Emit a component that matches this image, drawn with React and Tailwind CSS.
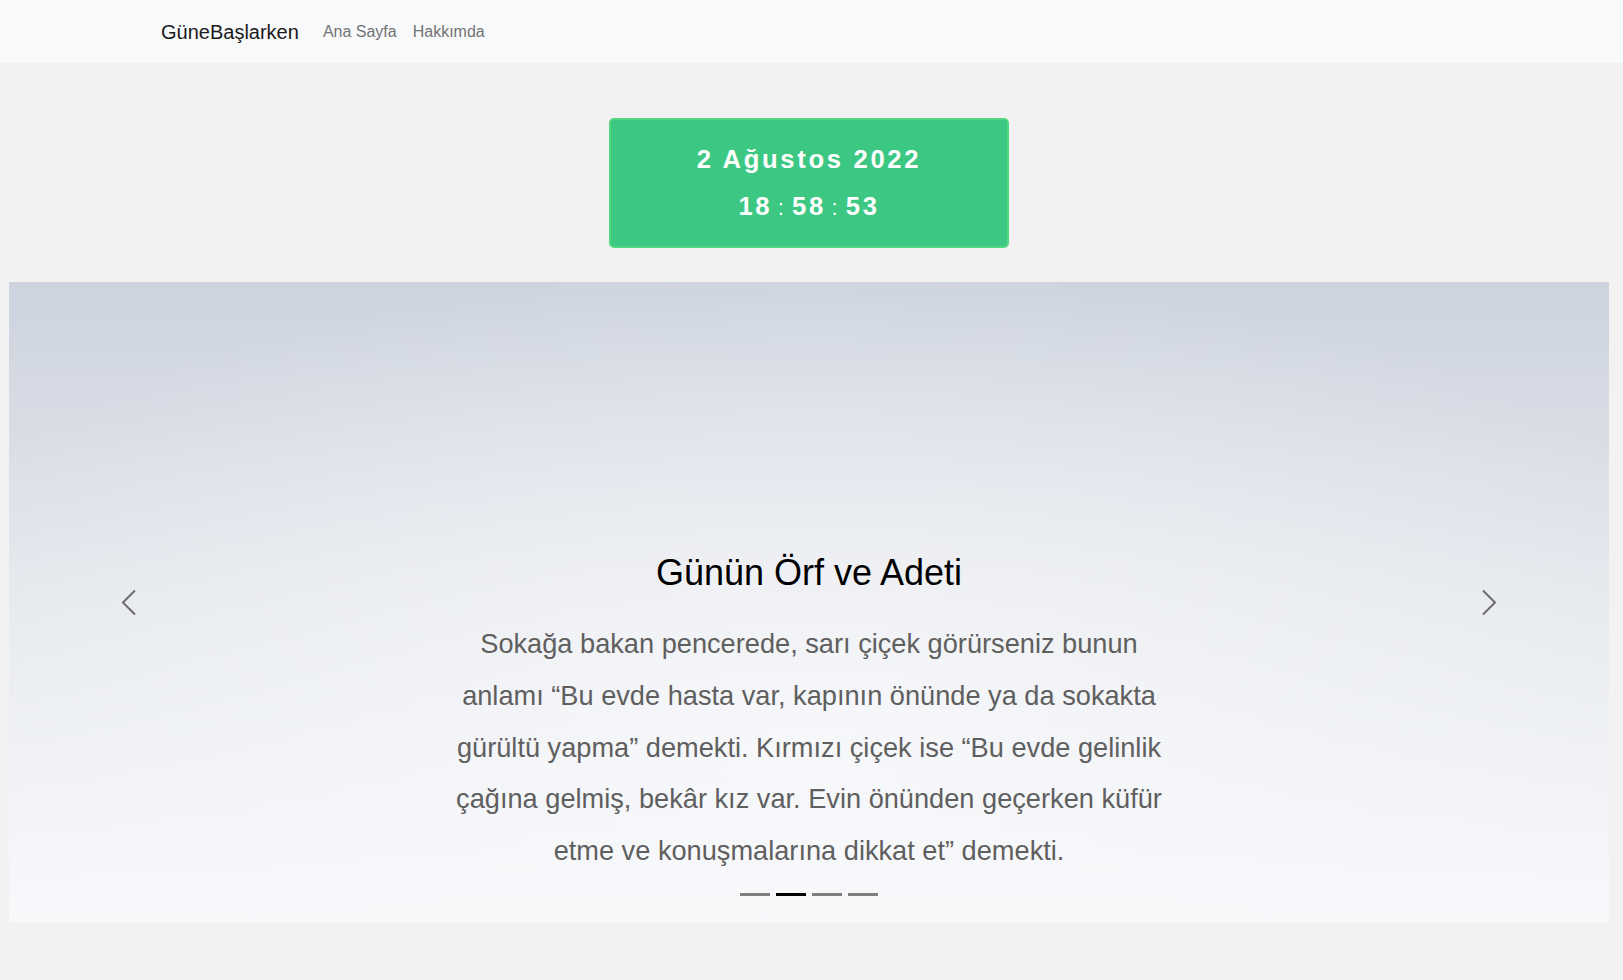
import React from 'react'

const SANS = "font-['Liberation_Sans',Arial,sans-serif]"

function Chevron({ dir }) {
  return (
    <svg width="16" height="27" viewBox="0 0 16 27" fill="none">
      <path
        d={dir === 'left' ? 'M14 1.5 L2 13.5 L14 25.5' : 'M2 1.5 L14 13.5 L2 25.5'}
        stroke="#6b6b6b"
        strokeWidth="2"
      />
    </svg>
  )
}

function Navbar() {
  return (
    <nav className="h-[63px] bg-[#f8f9fa] flex items-center pl-[161px]">
      <a className="text-[20px] text-[#1a1a1a] mr-[16px]">GüneBaşlarken</a>
      <div className="flex text-[16px] text-[#737373]">
        <a className="px-[8px]">Ana Sayfa</a>
        <a className="px-[8px]">Hakkımda</a>
      </div>
    </nav>
  )
}

function Clock() {
  return (
    <div className="w-[400px] h-[130px] rounded-[5px] border-2 border-[#52d680] bg-[#3cc883] text-white font-bold text-[25.6px] tracking-[0.105em] flex flex-col items-center justify-center gap-[9px]">
      <div className="leading-[38px]">2 Ağustos 2022</div>
      <div className="leading-[38px] flex items-baseline">
        <span>18</span>
        <span className="font-normal text-[22px] mx-[5.5px]">:</span>
        <span>58</span>
        <span className="font-normal text-[22px] mx-[5.5px]">:</span>
        <span>53</span>
      </div>
    </div>
  )
}

function Carousel() {
  const slides = [0, 1, 2, 3]
  return (
    <div className="w-[1600px] h-[640px] grid grid-cols-[240px_1fr_240px] bg-[radial-gradient(ellipse_65%_75%_at_50%_72%,rgba(248,249,251,0.85)_0%,rgba(248,249,251,0)_100%),linear-gradient(to_bottom,#cdd3df_0%,#e2e5eb_45%,#f8f9fb_100%)]">
      <div className="flex items-center justify-center">
        <Chevron dir="left" />
      </div>
      <div className="flex flex-col items-center justify-end pb-[26px]">
        <h2 className="text-[36px] leading-[43px] text-black mb-[24px]">Günün Örf ve Adeti</h2>
        <p className="w-[724px] text-center text-[27.2px] leading-[51.8px] text-[#5f5f5f]">
          Sokağa bakan pencerede, sarı çiçek görürseniz bunun anlamı “Bu evde hasta var, kapının önünde ya da sokakta gürültü yapma” demekti. Kırmızı çiçek ise “Bu evde gelinlik çağına gelmiş, bekâr kız var. Evin önünden geçerken küfür etme ve konuşmalarına dikkat et” demekti.
        </p>
        <div className="flex gap-[6px] mt-[16px]">
          {slides.map(i => (
            <span key={i} className={`w-[30px] h-[3px] ${i === 1 ? 'bg-black' : 'bg-[#7f7f7f]'}`} />
          ))}
        </div>
      </div>
      <div className="flex items-center justify-center">
        <Chevron dir="right" />
      </div>
    </div>
  )
}

export default function App() {
  return (
    <div className={`${SANS} min-h-screen bg-[#f2f2f2]`}>
      <Navbar />
      <main className="pl-[9px] pr-[14px] flex flex-col items-center pt-[55px] gap-[34px]">
        <Clock />
        <Carousel />
      </main>
    </div>
  )
}
